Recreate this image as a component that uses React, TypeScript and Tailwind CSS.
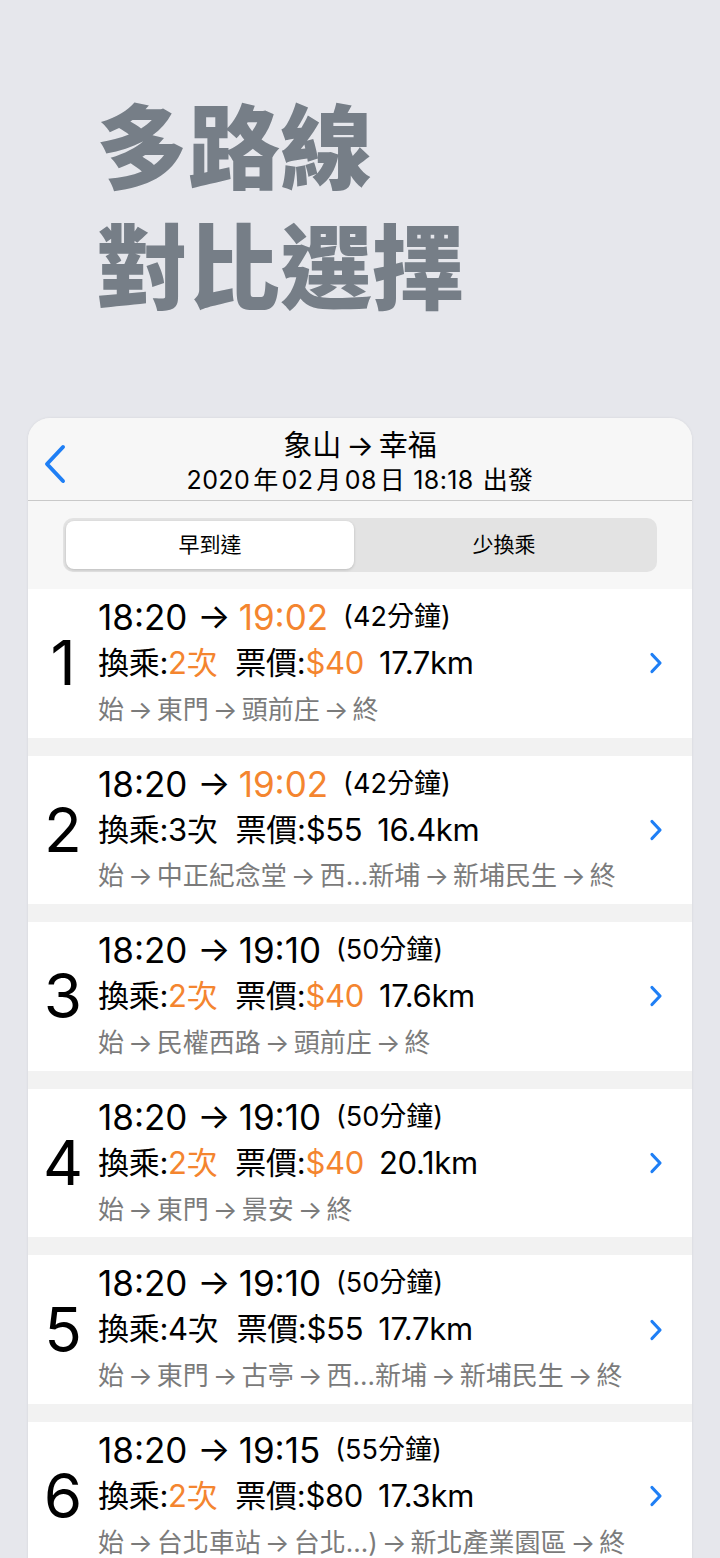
type Route = {
  no: number;
  dep: string;
  arr: string;
  fast: boolean;
  mins: number;
  transfers: number;
  transferHi: boolean;
  price: number;
  priceHi: boolean;
  km: string;
  stops: string[];
};

const ROUTES: Route[] = [
  { no: 1, dep: "18:20", arr: "19:02", fast: true, mins: 42, transfers: 2, transferHi: true, price: 40, priceHi: true, km: "17.7km", stops: ["始", "東門", "頭前庄", "終"] },
  { no: 2, dep: "18:20", arr: "19:02", fast: true, mins: 42, transfers: 3, transferHi: false, price: 55, priceHi: false, km: "16.4km", stops: ["始", "中正紀念堂", "西...新埔", "新埔民生", "終"] },
  { no: 3, dep: "18:20", arr: "19:10", fast: false, mins: 50, transfers: 2, transferHi: true, price: 40, priceHi: true, km: "17.6km", stops: ["始", "民權西路", "頭前庄", "終"] },
  { no: 4, dep: "18:20", arr: "19:10", fast: false, mins: 50, transfers: 2, transferHi: true, price: 40, priceHi: true, km: "20.1km", stops: ["始", "東門", "景安", "終"] },
  { no: 5, dep: "18:20", arr: "19:10", fast: false, mins: 50, transfers: 4, transferHi: false, price: 55, priceHi: false, km: "17.7km", stops: ["始", "東門", "古亭", "西...新埔", "新埔民生", "終"] },
  { no: 6, dep: "18:20", arr: "19:15", fast: false, mins: 55, transfers: 2, transferHi: true, price: 80, priceHi: false, km: "17.3km", stops: ["始", "台北車站", "台北...)", "新北產業園區", "終"] }
];

const FONT = { fontFamily: '"Inter", "Noto Sans CJK TC", sans-serif' };

function Chevron() {
  return (
    <svg width="14" height="22" viewBox="0 0 14 22" fill="none">
      <path d="M3 2.5 L11 11 L3 19.5" stroke="#1f7ff5" strokeWidth="3.2" strokeLinecap="round" strokeLinejoin="round" />
    </svg>
  );
}

function Path({ stops }: { stops: string[] }) {
  return (
    <>
      {stops.map((s, i) => (
        <span key={i} className="flex items-center">
          {i > 0 && <span className="mx-[4px]">→</span>}
          {s}
        </span>
      ))}
    </>
  );
}

function RouteRow({ r }: { r: Route }) {
  return (
    <div className="flex h-[148.6px] items-center bg-white">
      <div className="w-[70px] text-center text-[62px] leading-none text-black">{r.no}</div>
      <div className="flex flex-1 flex-col">
        <div className="flex h-[46px] items-center whitespace-nowrap text-[35px] text-black">
          <span>{r.dep} → </span>
          <span className={r.fast ? "ml-[8px] text-[#f4852f]" : "ml-[8px]"}>{r.arr}</span>
          <span className="ml-[15px] text-[27px]">({r.mins}分鐘)</span>
        </div>
        <div className="flex h-[46px] items-center whitespace-nowrap text-[31px] tracking-[-0.3px] text-black">
          <span>換乘:</span>
          <span className={r.transferHi ? "text-[#f4852f]" : ""}>{r.transfers}次</span>
          <span className="ml-[18px]">票價:</span>
          <span className={r.priceHi ? "text-[#f4852f]" : ""}>${r.price}</span>
          <span className="ml-[15px]">{r.km}</span>
        </div>
        <div className="flex h-[46px] items-center whitespace-nowrap text-[26px] text-[#7b7b7b]">
          <Path stops={r.stops} />
        </div>
      </div>
      <div className="mr-[29px] flex items-center">
        <Chevron />
      </div>
    </div>
  );
}

export default function App() {
  return (
    <div className="h-[1558px] overflow-hidden bg-[#e6e7ec]" style={FONT}>
      <div
        className="pl-[96px] pt-[82px] text-[92px] font-black leading-[120px] text-[#767e87]"
        style={{ fontFamily: '"Noto Sans CJK TC", sans-serif' }}
      >
        <div>多路線</div>
        <div>對比選擇</div>
      </div>

      <div className="mx-[28px] mt-[96px] overflow-hidden rounded-t-[22px] bg-[#f2f2f2] shadow-[0_0_3px_rgba(0,0,0,0.08)]">
        <div className="relative flex h-[83px] flex-col items-center border-b border-[#c9c9c9] bg-[#f7f7f7] pt-[11px]">
          <div className="absolute left-[14px] top-[26px]">
            <svg width="26" height="40" viewBox="0 0 26 40" fill="none">
              <path d="M21 3 L5 20 L21 37" stroke="#1f7ff5" strokeWidth="4" strokeLinecap="round" strokeLinejoin="round" />
            </svg>
          </div>
          <div className="flex h-[34px] items-center text-[29px] text-black">
            象山<span className="mx-[5px]">→</span>幸福
          </div>
          <div className="flex h-[36px] items-center whitespace-nowrap text-[25px] tracking-[0.4px] text-black">
            2020<span className="mx-[3px]">年</span>02<span className="mx-[3px]">月</span>08<span className="ml-[3px] mr-[8px]">日</span>18:18
            <span className="ml-[9px]">出發</span>
          </div>
        </div>

        <div className="bg-[#f7f7f7] px-[35px] py-[17px]">
          <div className="flex h-[54px] rounded-[10px] bg-[#e3e3e3] p-[3px]">
            <div className="flex w-[288px] items-center justify-center rounded-[8px] bg-white text-[21px] text-black shadow-[0_1px_3px_rgba(0,0,0,0.18)]">
              早到達
            </div>
            <div className="flex flex-1 items-center justify-center text-[21px] text-black">少換乘</div>
          </div>
        </div>

        <div className="flex flex-col gap-[18px]">
          {ROUTES.map((r) => (
            <RouteRow key={r.no} r={r} />
          ))}
        </div>
      </div>
    </div>
  );
}
